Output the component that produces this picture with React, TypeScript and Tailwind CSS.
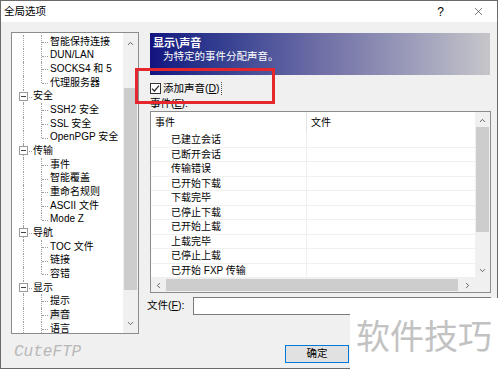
import { ChevronUp, ChevronDown, ChevronLeft, ChevronRight, X } from 'lucide-react';

type TreeNode = { t: string; l: 0 | 1; last?: boolean; sel?: boolean };

const tree: TreeNode[] = [
  { t: '智能保持连接', l: 1 },
  { t: 'DUN/LAN', l: 1 },
  { t: 'SOCKS4 和 5', l: 1 },
  { t: '代理服务器', l: 1, last: true },
  { t: '安全', l: 0 },
  { t: 'SSH2 安全', l: 1 },
  { t: 'SSL 安全', l: 1 },
  { t: 'OpenPGP 安全', l: 1, last: true },
  { t: '传输', l: 0 },
  { t: '事件', l: 1 },
  { t: '智能覆盖', l: 1 },
  { t: '重命名规则', l: 1 },
  { t: 'ASCII 文件', l: 1 },
  { t: 'Mode Z', l: 1, last: true },
  { t: '导航', l: 0 },
  { t: 'TOC 文件', l: 1 },
  { t: '链接', l: 1 },
  { t: '容错', l: 1, last: true },
  { t: '显示', l: 0 },
  { t: '提示', l: 1 },
  { t: '声音', l: 1, sel: true },
  { t: '语言', l: 1 },
];

const events = [
  '已建立会话',
  '已断开会话',
  '传输错误',
  '已开始下载',
  '下载完毕',
  '已停止下载',
  '已开始上载',
  '上载完毕',
  '已停止上载',
  '已开始 FXP 传输',
];

function TreeRow({ n }: { n: TreeNode }) {
  return (
    <div className="relative h-[13.67px] flex items-center">
      <span className="absolute left-[11px] top-0 bottom-0 border-l border-dotted border-[#a0a0a0]" />
      {n.l === 1 ? (
        <>
          <span
            className={`absolute left-[29px] top-0 border-l border-dotted border-[#a0a0a0] ${n.last ? 'h-[7px]' : 'bottom-0'}`}
          />
          <span className="absolute left-[30px] top-[7px] w-[6px] border-t border-dotted border-[#a0a0a0]" />
        </>
      ) : (
        <>
          <span className="absolute left-[7px] top-[2px] w-[9px] h-[9px] border border-[#9a9a9a] bg-white flex items-center justify-center">
            <span className="w-[5px] h-px bg-[#444]" />
          </span>
          <span className="absolute left-[17px] top-[7px] w-[3px] border-t border-dotted border-[#a0a0a0]" />
        </>
      )}
      <span className={`${n.l === 1 ? 'ml-[38px]' : 'ml-[21px]'} ${n.sel ? 'bg-[#e3e3e3]' : ''} whitespace-nowrap leading-none`}>
        {n.t}
      </span>
    </div>
  );
}

function Arrow({ dir }: { dir: 'up' | 'down' | 'left' | 'right' }) {
  const p = { size: 9, strokeWidth: 2.6, color: '#606060' };
  if (dir === 'up') return <ChevronUp {...p} />;
  if (dir === 'down') return <ChevronDown {...p} />;
  if (dir === 'left') return <ChevronLeft {...p} />;
  return <ChevronRight {...p} />;
}

export default function App() {
  return (
    <div className="relative w-[500px] h-[370px] bg-white overflow-hidden text-black font-['Liberation_Sans','Noto_Sans_CJK_SC',sans-serif]">
      <div className="w-[498px] h-[369px] border border-[#6a6a6a] bg-[#f0f0f0] flex flex-col">
        {/* 标题栏 */}
        <div className="h-[21px] bg-white flex items-center pl-[3px] pr-[12px] text-[10.5px]">
          <span>全局选项</span>
          <div className="ml-auto flex items-center gap-[28px]">
            <span className="text-[12px]">?</span>
            <X size={13} strokeWidth={1.1} color="#222" />
          </div>
        </div>

        <div className="flex pl-[10px] pt-[10px] text-[10.5px]">
          {/* 左侧树 */}
          <div className="w-[128px] flex flex-col">
            <div className="h-[302px] border border-[#8c8c8c] bg-white flex overflow-hidden">
              <div className="flex-1 pt-[2px] overflow-hidden text-[10px]">
                {tree.map((n, i) => (
                  <TreeRow key={i} n={n} />
                ))}
              </div>
              <div className="w-[15px] bg-[#f0f0f0] flex flex-col">
                <div className="h-[16px] flex items-end justify-center pb-[1px]">
                  <Arrow dir="up" />
                </div>
                <div className="h-[39px]" />
                <div className="mx-[1px] h-[202px] bg-[#cdcdcd]" />
                <div className="flex-1" />
                <div className="h-[16px] flex items-start justify-center pt-[2px]">
                  <Arrow dir="down" />
                </div>
              </div>
            </div>
            <div className="mt-[9px] pl-[3px] h-[18px] flex items-center italic text-[16px] text-[#b8b8b8] font-['Liberation_Mono',monospace]">
              CuteFTP
            </div>
          </div>

          {/* 右侧面板 */}
          <div className="ml-[11px] w-[341px] flex flex-col">
            <div className="mt-[1px] h-[42px] w-[340px] bg-gradient-to-r from-[#14137f] via-[#6f6ea6] to-[#c6c6ca] text-white pl-[3px] pt-[2px]">
              <div className="h-[14px] leading-[14px] font-bold text-[11px] font-['Noto_Sans_CJK_SC',sans-serif]">{'显示\\声音'}</div>
              <div className="h-[14px] leading-[14px] pl-[10px] text-[10.5px]">为特定的事件分配声音。</div>
            </div>

            <div className="mt-[5px] h-[16px] flex items-center">
              <span className="w-[11px] h-[11px] border border-[#333] bg-white flex items-center justify-center">
                <svg width="9" height="9" viewBox="0 0 9 9">
                  <path d="M1 4.6 L3.4 7 L8 1.6" fill="none" stroke="#222" strokeWidth="1.2" />
                </svg>
              </span>
              <span className="ml-[2px] pr-[1px] border-r border-dotted border-[#555] leading-[13px]">
                添加声音(<span className="underline">D</span>)
              </span>
            </div>

            <div className="mt-[1px] h-[14px] flex items-center">
              事件(<span className="underline">E</span>):
            </div>

            {/* 事件列表 */}
            <div className="h-[182px] border border-[#8c8c8c] bg-white flex flex-col">
              <div className="flex flex-1 min-h-0">
                <div className="flex-1 flex flex-col text-[10px]">
                  <div className="h-[21px] flex">
                    <div className="w-[156px] pl-[4px] flex items-center border-r border-[#e5e5e5]">事件</div>
                    <div className="pl-[4px] flex items-center">文件</div>
                  </div>
                  {events.map((e) => (
                    <div key={e} className="h-[14.5px] flex border-b border-[#f0f0f0]">
                      <div className="w-[156px] pl-[20px] flex items-center border-r border-[#f0f0f0] whitespace-nowrap">{e}</div>
                      <div className="flex-1" />
                    </div>
                  ))}
                </div>
                <div className="w-[15px] bg-[#f0f0f0] flex flex-col">
                  <div className="h-[15px] flex items-center justify-center pt-[1px]">
                    <Arrow dir="up" />
                  </div>
                  <div className="mx-[1px] h-[105px] bg-[#cdcdcd]" />
                  <div className="flex-1" />
                  <div className="h-[15px] flex items-center justify-center">
                    <Arrow dir="down" />
                  </div>
                </div>
              </div>
              <div className="h-[14px] flex bg-[#f0f0f0]">
                <div className="w-[15px] flex items-center justify-center">
                  <Arrow dir="left" />
                </div>
                <div className="my-[1px] w-[292px] bg-[#cdcdcd]" />
                <div className="flex-1" />
                <div className="w-[15px] flex items-center justify-center">
                  <Arrow dir="right" />
                </div>
                <div className="w-[15px]" />
              </div>
            </div>

            <div className="mt-[4px] h-[18px] flex -ml-[3px]">
              <div className="w-[46px] flex items-center">
                文件(<span className="underline">F</span>):
              </div>
              <div className="flex-1 border border-[#7a7a7a] bg-white" />
            </div>

            {/* 按钮：后两个被水印遮住 */}
            <div className="mt-[30px] flex justify-end gap-[7px]">
              <div className="w-[64px] h-[18px] border border-[#0078d7] bg-[#e1e1e1] flex items-center justify-center">确定</div>
              <div className="w-[64px] h-[18px] border border-[#adadad] bg-[#e1e1e1]" />
              <div className="w-[64px] h-[18px] border border-[#adadad] bg-[#e1e1e1]" />
            </div>
          </div>
        </div>
      </div>

      {/* 红色标注框 */}
      <div className="absolute left-[135px] top-[68px] w-[140px] h-[36px] border-[3px] border-[#e5262c]" />

      {/* 水印 */}
      <div className="absolute left-[350px] top-[298px] w-[150px] h-[72px] bg-white flex items-center pl-[6px] text-[34px] text-[#c2c2c2] font-['Noto_Sans_CJK_SC',sans-serif]">
        软件技巧
      </div>
    </div>
  );
}
